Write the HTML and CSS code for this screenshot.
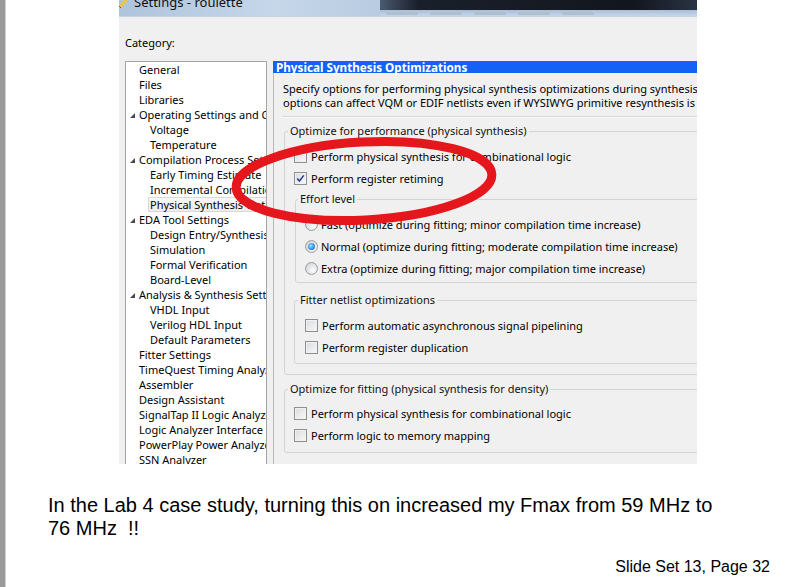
FILE: index.html
```html
<!DOCTYPE html>
<html>
<head>
<meta charset="utf-8">
<title>Slide Set 13, Page 32</title>
<link rel="stylesheet" href="styles.css">
</head>
<body>
<div class="page">
  <div class="leftbar"></div>
  <div class="slide">
    <div class="shot">
      <div class="titlebar">
        <div class="tb-left">
          <svg class="tb-icon" width="8" height="8" viewBox="0 0 8 8"><path d="M0 6 L5 0 L8 0 L8 2 L2 8 L0 8 Z" fill="#e8c64a"/><path d="M0 6 L2 8" stroke="#7a5a10" stroke-width="1"/></svg>
          <span class="tb-title">Settings - roulette</span>
        </div>
        <div class="tb-right">
          <div class="tb-dark"></div>
          <div class="tb-menu"><span></span><span></span><span></span><span></span><span></span></div>
        </div>
      </div>
      <div class="dlg">
        <div class="cat-label">Category:</div>
        <div class="dlg-row">
          <ul class="tree">
            <li>General</li>
            <li>Files</li>
            <li>Libraries</li>
            <li class="exp"><i class="tri"></i>Operating Settings and Conditions</li>
            <li class="sub">Voltage</li>
            <li class="sub">Temperature</li>
            <li class="exp"><i class="tri"></i>Compilation Process Settings</li>
            <li class="sub">Early Timing Estimate</li>
            <li class="sub">Incremental Compilation</li>
            <li class="sub sel">Physical Synthesis Optimizations</li>
            <li class="exp"><i class="tri"></i>EDA Tool Settings</li>
            <li class="sub">Design Entry/Synthesis</li>
            <li class="sub">Simulation</li>
            <li class="sub">Formal Verification</li>
            <li class="sub">Board-Level</li>
            <li class="exp"><i class="tri"></i>Analysis &amp; Synthesis Settings</li>
            <li class="sub">VHDL Input</li>
            <li class="sub">Verilog HDL Input</li>
            <li class="sub">Default Parameters</li>
            <li>Fitter Settings</li>
            <li>TimeQuest Timing Analyzer</li>
            <li>Assembler</li>
            <li>Design Assistant</li>
            <li>SignalTap II Logic Analyzer</li>
            <li>Logic Analyzer Interface</li>
            <li>PowerPlay Power Analyzer Settings</li>
            <li>SSN Analyzer</li>
          </ul>
          <div class="panel">
            <div class="ph">Physical Synthesis Optimizations</div>
            <div class="desc">Specify options for performing physical synthesis optimizations during synthesis and fitting.<br>options can affect VQM or EDIF netlists even if WYSIWYG primitive resynthesis is disabled.</div>
            <div class="sep"></div>
            <fieldset class="grp g1">
              <legend>Optimize for performance (physical synthesis)</legend>
              <div class="row"><span class="cb"></span>Perform physical synthesis for combinational logic</div>
              <div class="row"><span class="cb on"><svg width="11" height="11" viewBox="0 0 11 11"><path d="M2.2 5.6 L4.4 8 L8.8 2.4" fill="none" stroke="#233a8a" stroke-width="1.5"/></svg></span>Perform register retiming</div>
              <fieldset class="grp effort">
                <legend>Effort level</legend>
                <div class="row"><span class="rb"></span>Fast (optimize during fitting; minor compilation time increase)</div>
                <div class="row"><span class="rb on"></span>Normal (optimize during fitting; moderate compilation time increase)</div>
                <div class="row"><span class="rb"></span>Extra (optimize during fitting; major compilation time increase)</div>
              </fieldset>
              <fieldset class="grp fitter">
                <legend>Fitter netlist optimizations</legend>
                <div class="row"><span class="cb"></span>Perform automatic asynchronous signal pipelining</div>
                <div class="row"><span class="cb"></span>Perform register duplication</div>
              </fieldset>
            </fieldset>
            <fieldset class="grp g2">
              <legend>Optimize for fitting (physical synthesis for density)</legend>
              <div class="row"><span class="cb"></span>Perform physical synthesis for combinational logic</div>
              <div class="row"><span class="cb"></span>Perform logic to memory mapping</div>
            </fieldset>
          </div>
        </div>
      </div>
    </div>
    <p class="note">In the Lab 4 case study, turning this on increased my Fmax from 59 MHz to<br>76 MHz&nbsp; !!</p>
    <div class="footer">Slide Set 13, Page 32</div>
  </div>
</div>
<svg class="mark" width="802" height="587" viewBox="0 0 802 587">
  <ellipse cx="364" cy="181" rx="128" ry="39" transform="rotate(-3 364 181)" fill="none" stroke="#e5161c" stroke-width="9"/>
</svg>
</body>
</html>
```

FILE: styles.css
```css
html, body {
  margin: 0;
  padding: 0;
}
body {
  background: #ffffff;
  width: 802px;
  height: 587px;
  overflow: hidden;
  position: relative;
  font-family: "Liberation Sans", Arial, sans-serif;
  color: #000;
}
.page {
  display: flex;
  height: 587px;
}
.leftbar {
  flex: none;
  width: 5px;
  background: #9a9a9a;
  border-right: 1px solid #d0d0d0;
}
.slide {
  flex: 1;
  display: flex;
  flex-direction: column;
}
.shot {
  margin-left: 113px;
  width: 578px;
  height: 464px;
  overflow: hidden;
  background: #f0f0f0;
  font-family: "Noto Sans", sans-serif;
  font-size: 11px;
  color: #000;
}

/* title bar */
.titlebar {
  display: flex;
  height: 17px;
  border-bottom: 1px solid #c9d3dd;
  box-sizing: border-box;
}
.tb-left {
  width: 261px;
  flex: none;
  display: flex;
  align-items: flex-start;
  background: linear-gradient(to right, #aec4dc, #c6d7ea 60%, #b8cbe0);
  overflow: hidden;
}
.tb-icon {
  display: block;
  margin-right: 7px;
}
.tb-title {
  font-size: 13px;
  line-height: 13px;
  margin-top: -4px;
  color: #111;
}
.tb-right {
  flex: 1;
  display: flex;
  flex-direction: column;
}
.tb-dark {
  height: 10px;
  background: linear-gradient(to right, #4a5a70, #1a202b 12%, #12161e 80%, #2a3344);
}
.tb-menu {
  flex: 1;
  display: flex;
  align-items: center;
  gap: 12px;
  padding-left: 6px;
  background: linear-gradient(to bottom, #a9bed6, #c4d6e9);
}
.tb-menu span {
  display: block;
  width: 32px;
  height: 3px;
  background: #b0bfcf;
  border-radius: 2px;
}

/* dialog */
.dlg {
  padding: 19px 0 0 6px;
}
.cat-label {
  line-height: 14px;
  height: 14px;
  margin-bottom: 11px;
}
.dlg-row {
  display: flex;
  align-items: flex-start;
}
.tree {
  flex: none;
  width: 142px;
  height: 410px;
  box-sizing: border-box;
  margin: 0;
  padding: 0;
  list-style: none;
  background: #fff;
  border: 1px solid #a5a5a5;
  border-bottom: none;
  overflow: hidden;
}
.tree li {
  height: 15px;
  line-height: 15px;
  white-space: nowrap;
  padding-left: 13px;
  display: flex;
  align-items: center;
}
.tree li.exp {
  padding-left: 4px;
}
.tree li.sub {
  padding-left: 24px;
}
.tree li.sel {
  margin-left: 22px;
  padding-left: 1px;
  box-sizing: border-box;
  border: 1px solid #d9d9d9;
  border-right: none;
  background: linear-gradient(#f8f8f8, #ececec);
}
.tri {
  display: block;
  width: 0;
  height: 0;
  border-left: 5px solid transparent;
  border-bottom: 5px solid #4a4a4a;
  margin-right: 4px;
  margin-top: 1px;
}

/* settings panel */
.panel {
  flex: none;
  margin-left: 6px;
  width: 440px;
  height: 420px;
  border-left: 1px solid #b8b8b8;
}
.ph {
  height: 12px;
  line-height: 12px;
  background: #1462f5;
  color: #fff;
  font-weight: bold;
  font-size: 11.7px;
  padding-left: 3px;
  margin-left: -1px;
  white-space: nowrap;
}
.desc {
  margin: 9px 0 0 9px;
  line-height: 14px;
  white-space: nowrap;
}
.sep {
  margin: 6px 0 0 9px;
  border-top: 1px solid #d6d6d6;
  border-bottom: 1px solid #fbfbfb;
}
.grp {
  margin: 0;
  border: 1px solid #d3d3d3;
  border-radius: 3px;
  min-inline-size: 0;
}
.grp legend {
  padding: 0 2px;
  line-height: 14px;
  white-space: nowrap;
  color: #111;
}
.g1 {
  margin: 6px 0 0 10px;
  padding: 7px 0 10px 9px;
}
.g1 > legend {
  margin-left: -6px;
}
.effort {
  margin: 3px 0 0 1px;
  padding: 7px 0 3px 9px;
}
.effort > legend {
  margin-left: -7px;
}
.fitter {
  margin: 10px 0 0 0;
  padding: 7px 0 5px 10px;
}
.fitter > legend {
  margin-left: -7px;
}
.g2 {
  margin: 7px 0 0 10px;
  padding: 6px 0 6px 9px;
}
.g2 > legend {
  margin-left: -6px;
}
.row {
  display: flex;
  align-items: center;
  height: 22px;
  white-space: nowrap;
}
.cb {
  flex: none;
  width: 13px;
  height: 13px;
  box-sizing: border-box;
  border: 1px solid #8f9092;
  background: linear-gradient(135deg, #d9dbde, #f9f9f9);
  box-shadow: inset 0 0 0 1px #eef0f2;
  margin-right: 4px;
  display: flex;
  align-items: center;
  justify-content: center;
}
.cb svg {
  display: block;
}
.rb {
  flex: none;
  position: relative;
  width: 13px;
  height: 13px;
  box-sizing: border-box;
  border: 1px solid #9a9c9f;
  border-radius: 50%;
  background: radial-gradient(circle at 65% 65%, #ffffff, #d8dadc 70%);
  margin-right: 3px;
}
.rb.on::after {
  content: "";
  position: absolute;
  left: 2px;
  top: 2px;
  width: 7px;
  height: 7px;
  border-radius: 50%;
  background: radial-gradient(circle at 40% 40%, #a6e1ff, #2b8ad8 60%, #1a5ea8);
}

/* slide text */
.note {
  margin: 30px 0 0 42px;
  font-size: 20px;
  line-height: 23px;
}
.footer {
  margin-top: 18px;
  text-align: right;
  padding-right: 32px;
  font-size: 16px;
  line-height: 18px;
}

.mark {
  position: absolute;
  left: 0;
  top: 0;
  pointer-events: none;
}
```
